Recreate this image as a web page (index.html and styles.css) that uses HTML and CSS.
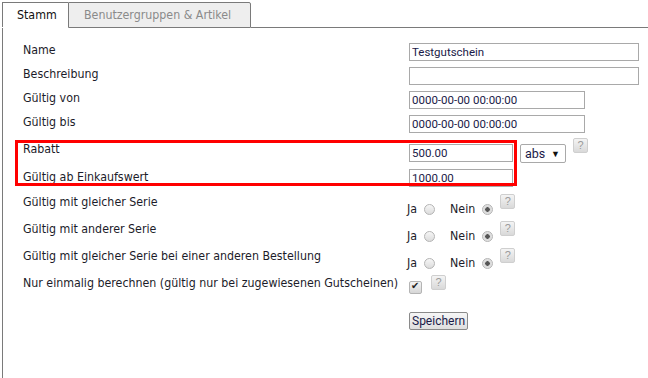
FILE: index.html
```html
<!DOCTYPE html>
<html>
<head>
    <title>Gutschein bearbeiten</title>
    <meta charset="utf-8" />
    <link rel="stylesheet" href="styles.css">
</head>
<body>
    <div class="tabs">
        <div class="tab tab-active">Stamm</div>
        <div class="tab tab-inactive">Benutzergruppen &amp; Artikel</div>
        <div class="tab-filler"></div>
    </div>

    <div class="panel">
        <div class="form-grid">
            <div class="row row-text">
                <div class="label">Name</div>
                <div class="control"><input class="text-input wide" type="text" value="Testgutschein"></div>
            </div>
            <div class="row row-text">
                <div class="label">Beschreibung</div>
                <div class="control"><input class="text-input wide" type="text" value=""></div>
            </div>
            <div class="row row-text">
                <div class="label">Gültig von</div>
                <div class="control"><input class="text-input date" type="text" value="0000-00-00 00:00:00"></div>
            </div>
            <div class="row row-text">
                <div class="label">Gültig bis</div>
                <div class="control"><input class="text-input date" type="text" value="0000-00-00 00:00:00"></div>
            </div>
            <div class="row row-rabatt">
                <div class="label label-low">Rabatt</div>
                <div class="control">
                    <input class="text-input short push-rabatt" type="text" value="500.00">
                    <span class="select-box push-rabatt">abs <span class="select-arrow">▼</span></span>
                    <span class="help">?</span>
                </div>
            </div>
            <div class="row row-wert">
                <div class="label label-low">Gültig ab Einkaufswert</div>
                <div class="control"><input class="text-input short push-wert" type="text" value="1000.00"></div>
            </div>
            <div class="row row-radio">
                <div class="label label-radio">Gültig mit gleicher Serie</div>
                <div class="control">
                    <label class="choice">Ja <input type="radio" name="serie1"></label>
                    <label class="choice">Nein <input type="radio" name="serie1" checked></label>
                    <span class="help">?</span>
                </div>
            </div>
            <div class="row row-radio">
                <div class="label label-radio">Gültig mit anderer Serie</div>
                <div class="control">
                    <label class="choice">Ja <input type="radio" name="serie2"></label>
                    <label class="choice">Nein <input type="radio" name="serie2" checked></label>
                    <span class="help">?</span>
                </div>
            </div>
            <div class="row row-radio">
                <div class="label label-radio">Gültig mit gleicher Serie bei einer anderen Bestellung</div>
                <div class="control">
                    <label class="choice">Ja <input type="radio" name="serie3"></label>
                    <label class="choice">Nein <input type="radio" name="serie3" checked></label>
                    <span class="help">?</span>
                </div>
            </div>
            <div class="row row-check">
                <div class="label label-radio">Nur einmalig berechnen (gültig nur bei zugewiesenen Gutscheinen)</div>
                <div class="control">
                    <input class="check" type="checkbox" checked>
                    <span class="help">?</span>
                </div>
            </div>
            <div class="row row-submit">
                <div class="label"></div>
                <div class="control"><button class="save-button">Speichern</button></div>
            </div>
        </div>

        <div class="highlight"></div>
    </div>
</body>
</html>
```

FILE: styles.css
```css
html,body {
    height: 100%;
    margin: 0;
    font-family: "DejaVu Sans Condensed", "DejaVu Sans", sans-serif;
    font-size: 12.3px;
    color: #1c1c2a;
    background-color: #ffffff;
}

body {
    display: flex;
    flex-direction: column;
}

/* Tabs */
.tabs {
    display: flex;
    padding: 2px 0 0 2px;
}

.tab {
    height: 24px;
    line-height: 24px;
    border-top: 1px solid #7a7a7a;
    white-space: nowrap;
}

.tab-active {
    width: 51px;
    padding-left: 14px;
    border-left: 1px solid #7a7a7a;
    background-color: #ffffff;
    color: #111111;
}

.tab-inactive {
    padding: 0 0 0 15px;
    width: 166px;
    border: 1px solid #7a7a7a;
    border-radius: 0 2px 0 0;
    background-color: #eeeeee;
    color: #8a8a8a;
}

.tab-filler {
    flex: 1;
    border-bottom: 1px solid #7a7a7a;
}

/* Panel */
.panel {
    position: relative;
    flex: 1;
    margin-left: 2px;
    border-left: 1px solid #7a7a7a;
    padding: 14px 0 0 20px;
}

.form-grid {
    display: grid;
    grid-template-columns: 386px 1fr;
}

.row {
    display: contents;
}

.label,
.control {
    box-sizing: border-box;
}

.label {
    line-height: 16px;
    white-space: nowrap;
}

.control {
    display: flex;
    align-items: flex-start;
}

.row-text .label,
.row-text .control {
    height: 24px;
}

.row-text .text-input {
    margin-top: 1px;
}

.row-rabatt .label,
.row-rabatt .control {
    height: 28px;
}

.row-wert .label,
.row-wert .control {
    height: 25px;
}

.row-radio .label,
.row-radio .control {
    height: 27px;
}

.row-check .label,
.row-check .control {
    height: 24px;
}

.label-low {
    padding-top: 3px;
}

.label-radio {
    padding-top: 3px;
}

/* Inputs */
.text-input {
    box-sizing: border-box;
    height: 18px;
    margin: 0;
    padding: 0 2px;
    border: 1px solid #a9a9a9;
    font-family: Roboto, "Liberation Sans", sans-serif;
    font-size: 11.5px;
    color: #1a1a48;
    background-color: #ffffff;
}

.wide {
    width: 230px;
}

.date {
    width: 176px;
}

.short {
    width: 104px;
}

.push-rabatt {
    margin-top: 6px;
}

.push-wert {
    margin-top: 3px;
}

.select-box {
    box-sizing: border-box;
    display: inline-flex;
    align-items: center;
    justify-content: space-between;
    width: 46px;
    height: 19px;
    margin-left: 7px;
    padding: 0 5px 0 4px;
    border: 1px solid #a9a9a9;
    border-radius: 2px;
    font-family: Roboto, "Liberation Sans", sans-serif;
    font-size: 12.5px;
    color: #1a1a48;
}

.select-arrow {
    font-size: 9px;
    color: #111111;
}

.help {
    box-sizing: border-box;
    display: inline-block;
    width: 15px;
    height: 15px;
    margin-left: 7px;
    border: 1px solid #cfcfcf;
    border-radius: 2px;
    background: linear-gradient(#f4f4f4, #d9d9d9);
    color: #9a9a9a;
    font-family: "Liberation Sans", sans-serif;
    font-size: 11px;
    line-height: 13px;
    text-align: center;
}

.row-radio .help {
    margin-top: 3px;
}

.choice {
    display: inline-flex;
    align-items: center;
    margin-top: 10px;
    line-height: 16px;
}

.choice:first-child {
    margin-left: -2px;
}

.choice + .choice {
    margin-left: 15px;
}

.choice input {
    appearance: none;
    box-sizing: border-box;
    width: 11px;
    height: 11px;
    margin: 0 0 0 7px;
    border: 1px solid #b4b4b4;
    border-radius: 50%;
    background: linear-gradient(#f6f6f6, #dcdcdc);
}

.choice input:checked {
    background: radial-gradient(circle, #555555 0, #555555 2px, #d6d6d6 2.5px, #f0f0f0 100%);
}

.check {
    appearance: none;
    box-sizing: border-box;
    position: relative;
    width: 13px;
    height: 13px;
    margin: 9px 0 0 0;
    border: 1px solid #b4b4b4;
    border-radius: 2px;
    background: linear-gradient(#f4f4f4, #d6d6d6);
}

.check:checked::after {
    content: "✔";
    position: absolute;
    left: 1px;
    top: -2px;
    font-size: 10px;
    color: #222222;
}

.row-check .help {
    margin-top: 3px;
    margin-left: 9px;
}

.save-button {
    height: 18px;
    margin-top: 16px;
    padding: 0 2px;
    border: 1px solid #8a8a8a;
    border-radius: 2px;
    background: linear-gradient(#f6f6f6, #dedede);
    font-family: Roboto, "Liberation Sans", sans-serif;
    font-size: 12px;
    color: #1a1a48;
}

/* Red annotation frame drawn over the discount rows */
.highlight {
    position: absolute;
    left: 12px;
    top: 112px;
    width: 496px;
    height: 40px;
    border: 3px solid #ff0000;
}
```
